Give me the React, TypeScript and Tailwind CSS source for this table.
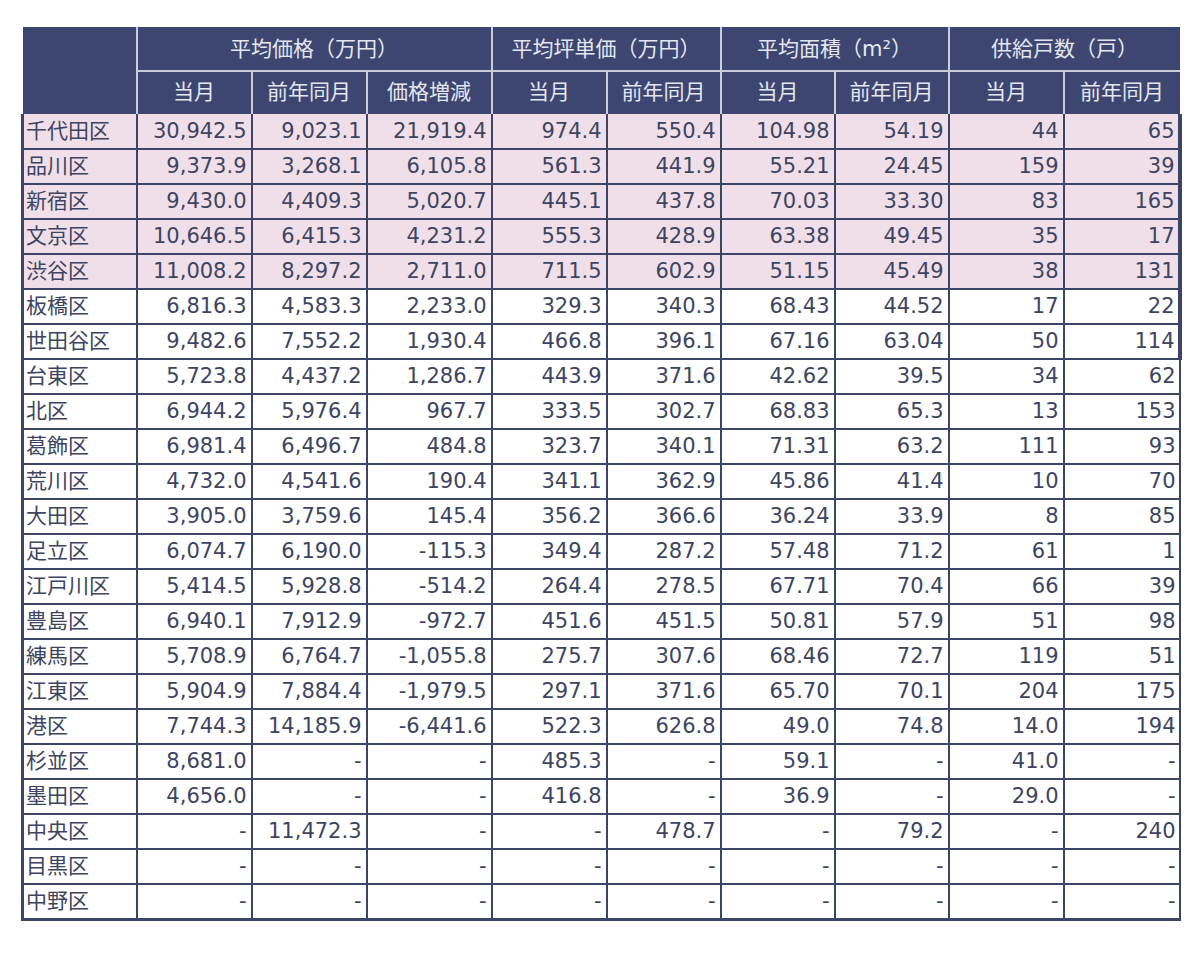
const rows: string[][] = [
  ['千代田区', '30,942.5', '9,023.1', '21,919.4', '974.4', '550.4', '104.98', '54.19', '44', '65'],
  ['品川区', '9,373.9', '3,268.1', '6,105.8', '561.3', '441.9', '55.21', '24.45', '159', '39'],
  ['新宿区', '9,430.0', '4,409.3', '5,020.7', '445.1', '437.8', '70.03', '33.30', '83', '165'],
  ['文京区', '10,646.5', '6,415.3', '4,231.2', '555.3', '428.9', '63.38', '49.45', '35', '17'],
  ['渋谷区', '11,008.2', '8,297.2', '2,711.0', '711.5', '602.9', '51.15', '45.49', '38', '131'],
  ['板橋区', '6,816.3', '4,583.3', '2,233.0', '329.3', '340.3', '68.43', '44.52', '17', '22'],
  ['世田谷区', '9,482.6', '7,552.2', '1,930.4', '466.8', '396.1', '67.16', '63.04', '50', '114'],
  ['台東区', '5,723.8', '4,437.2', '1,286.7', '443.9', '371.6', '42.62', '39.5', '34', '62'],
  ['北区', '6,944.2', '5,976.4', '967.7', '333.5', '302.7', '68.83', '65.3', '13', '153'],
  ['葛飾区', '6,981.4', '6,496.7', '484.8', '323.7', '340.1', '71.31', '63.2', '111', '93'],
  ['荒川区', '4,732.0', '4,541.6', '190.4', '341.1', '362.9', '45.86', '41.4', '10', '70'],
  ['大田区', '3,905.0', '3,759.6', '145.4', '356.2', '366.6', '36.24', '33.9', '8', '85'],
  ['足立区', '6,074.7', '6,190.0', '-115.3', '349.4', '287.2', '57.48', '71.2', '61', '1'],
  ['江戸川区', '5,414.5', '5,928.8', '-514.2', '264.4', '278.5', '67.71', '70.4', '66', '39'],
  ['豊島区', '6,940.1', '7,912.9', '-972.7', '451.6', '451.5', '50.81', '57.9', '51', '98'],
  ['練馬区', '5,708.9', '6,764.7', '-1,055.8', '275.7', '307.6', '68.46', '72.7', '119', '51'],
  ['江東区', '5,904.9', '7,884.4', '-1,979.5', '297.1', '371.6', '65.70', '70.1', '204', '175'],
  ['港区', '7,744.3', '14,185.9', '-6,441.6', '522.3', '626.8', '49.0', '74.8', '14.0', '194'],
  ['杉並区', '8,681.0', '-', '-', '485.3', '-', '59.1', '-', '41.0', '-'],
  ['墨田区', '4,656.0', '-', '-', '416.8', '-', '36.9', '-', '29.0', '-'],
  ['中央区', '-', '11,472.3', '-', '-', '478.7', '-', '79.2', '-', '240'],
  ['目黒区', '-', '-', '-', '-', '-', '-', '-', '-', '-'],
  ['中野区', '-', '-', '-', '-', '-', '-', '-', '-', '-'],
];

const widths = ['w-[114px]', 'w-[115px]', 'w-[115px]', 'w-[125px]', 'w-[115px]', 'w-[114px]', 'w-[114px]', 'w-[114px]', 'w-[115px]', 'w-[116px]'];

export default function App() {
  return (
    <div className="min-h-[956px] w-[1200px] bg-white pt-[27px] pl-[21px]">
      <table
        className="w-[1157px] table-fixed border-collapse text-[21px] text-[#3d4462]"
        style={{ fontFamily: '"DejaVu Sans", "Noto Sans CJK JP", sans-serif' }}
      >
        <colgroup>
          {widths.map((w, i) => (
            <col key={i} className={w} />
          ))}
        </colgroup>
        <thead className="bg-[#3d4671] text-[21px] text-[#e4e7f0]">
          <tr className="h-[44px]">
            <th rowSpan={2} className="border-r-2 border-[#c9cdda] font-normal"></th>
            <th colSpan={3} className="border-r-2 border-b-2 border-[#c9cdda] pt-[2px] font-normal">
              平均価格（万円）
            </th>
            <th colSpan={2} className="border-r-2 border-b-2 border-[#c9cdda] pt-[2px] font-normal">
              平均坪単価（万円）
            </th>
            <th colSpan={2} className="border-r-2 border-b-2 border-[#c9cdda] pt-[2px] font-normal">
              平均面積（m²）
            </th>
            <th colSpan={2} className="border-b-2 border-[#c9cdda] pt-[2px] font-normal">
              供給戸数（戸）
            </th>
          </tr>
          <tr className="h-[43px]">
            <th className="border-r-2 border-[#c9cdda] font-normal">当月</th>
            <th className="border-r-2 border-[#c9cdda] font-normal">前年同月</th>
            <th className="border-r-2 border-[#c9cdda] font-normal">価格増減</th>
            <th className="border-r-2 border-[#c9cdda] font-normal">当月</th>
            <th className="border-r-2 border-[#c9cdda] font-normal">前年同月</th>
            <th className="border-r-2 border-[#c9cdda] font-normal">当月</th>
            <th className="border-r-2 border-[#c9cdda] font-normal">前年同月</th>
            <th className="border-r-2 border-[#c9cdda] font-normal">当月</th>
            <th className="font-normal">前年同月</th>
          </tr>
        </thead>
        <tbody>
          {rows.map((r, ri) => (
            <tr
              key={r[0]}
              className={`h-[35px] leading-none ${ri < 5 ? 'bg-[#f0dfe8]' : 'bg-white'} ${
                ri === rows.length - 1 ? 'border-b-[3px]' : 'border-b-2'
              } border-[#3c4468]`}
            >
              {r.map((c, ci) => (
                <td
                  key={ci}
                  className={`align-middle ${
                    ci === 0
                      ? 'border-l-[3px] border-r-2 pl-[2px] text-left'
                      : ci === 9
                        ? `${ri < 7 ? 'border-r-[4px]' : 'border-r-2'} pr-[3px] text-right`
                        : 'border-r-2 pr-[4px] text-right'
                  } border-[#3c4468]`}
                >
                  {c}
                </td>
              ))}
            </tr>
          ))}
        </tbody>
      </table>
    </div>
  );
}
